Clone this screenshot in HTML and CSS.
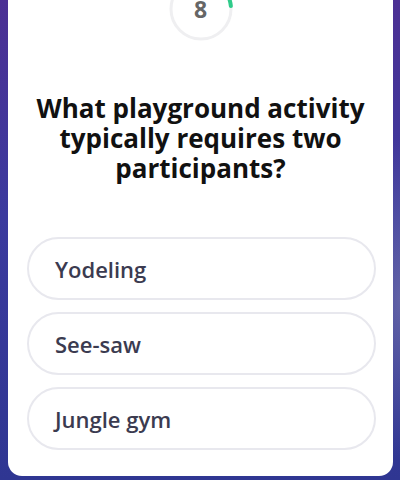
FILE: index.html
```html
<!DOCTYPE html>
<html lang="en">
<head>
    <meta charset="UTF-8">
    <meta name="viewport" content="width=device-width, initial-scale=1.0">
    <title>Quiz</title>
    <link rel="stylesheet" href="styles.css">
</head>
<body>
    <div class="card">
        <div class="timer">
            <svg class="ring" width="64" height="64" viewBox="0 0 64 64">
                <circle cx="32" cy="32" r="30" fill="none" stroke="#efeff1" stroke-width="3"/>
                <!-- remaining time arc, starts at 12 o'clock -->
                <circle cx="32" cy="32" r="30" fill="none" stroke="#2fcb8a" stroke-width="4"
                        stroke-dasharray="44 200" transform="rotate(-90 32 32)" stroke-linecap="round"/>
            </svg>
            <span class="count">8</span>
        </div>

        <h1 class="question">What playground activity typically requires two participants?</h1>

        <div class="options">
            <button class="option">Yodeling</button>
            <button class="option">See-saw</button>
            <button class="option">Jungle gym</button>
        </div>
    </div>
</body>
</html>
```

FILE: styles.css
```css
html, body {
    height: 100%;
}
body {
    margin: 0;
    overflow: hidden;
    background:
        radial-gradient(ellipse 40px 160px at 400px 300px, rgba(150, 150, 180, 0.45), transparent),
        linear-gradient(180deg, #4c3094 0%, #3b3a9e 45%, #2f3692 100%);
    font-family: "Open Sans", "Noto Sans", sans-serif;
}
.card {
    margin: 0 7px 0 8px;
    height: 476px;
    background: #fff;
    border-radius: 0 0 14px 14px;
    display: flex;
    flex-direction: column;
    align-items: center;
}
.timer {
    position: relative;
    width: 64px;
    height: 64px;
    margin-top: -23px;
    display: flex;
    align-items: center;
    justify-content: center;
}
.ring {
    position: absolute;
    top: 0;
    left: 0;
}
.count {
    position: relative;
    margin-top: -1px;
    font-size: 23px;
    font-weight: 700;
    color: #666;
}
.question {
    margin: 52px 10px 0;
    font-size: 26px;
    line-height: 30px;
    font-weight: 700;
    color: #111;
    text-align: center;
}
.options {
    align-self: stretch;
    margin: 54px 17px 0 19px;
    display: flex;
    flex-direction: column;
    gap: 12px;
}
.option {
    height: 63px;
    padding: 0 26px;
    border: 2px solid #e8e8ee;
    border-radius: 32px;
    background: #fff;
    text-align: left;
    font-family: inherit;
    font-size: 22px;
    font-weight: 600;
    color: #3b3b50;
}
```
